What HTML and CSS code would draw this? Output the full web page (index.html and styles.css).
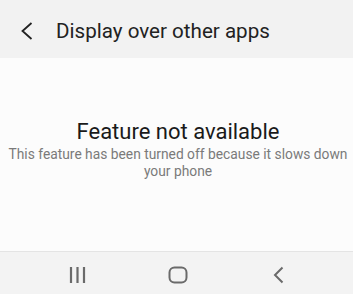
FILE: index.html
```html
<!DOCTYPE html>
<html>
<head>
<meta charset="utf-8">
<link rel="stylesheet" href="styles.css">
</head>
<body>
<div class="screen">
  <header class="appbar">
    <svg class="back" width="12" height="18" viewBox="0 0 12 18"><path d="M10.5 1 L1.5 9 L10.5 17" fill="none" stroke="#222" stroke-width="1.8"/></svg>
    <h1 class="title">Display over other apps</h1>
  </header>
  <main class="content">
    <h2 class="headline">Feature not available</h2>
    <p class="message">This feature has been turned off because it slows down your phone</p>
  </main>
  <nav class="navbar">
    <svg class="nav-icon" width="20" height="18" viewBox="0 0 20 18"><path d="M3 1 V17 M9.5 1 V17 M16 1 V17" stroke="#6a6a6a" stroke-width="2.2"/></svg>
    <svg class="nav-icon" width="20" height="18" viewBox="0 0 20 18"><rect x="1.5" y="1.5" width="17" height="15" rx="5" fill="none" stroke="#6a6a6a" stroke-width="2"/></svg>
    <svg class="nav-icon" width="20" height="18" viewBox="0 0 20 18"><path d="M14.5 1.5 L7 9 L14.5 16.5" fill="none" stroke="#6a6a6a" stroke-width="2"/></svg>
  </nav>
</div>
</body>
</html>
```
FILE: styles.css
```css
html, body { margin: 0; padding: 0; }
body { font-family: Roboto, "Noto Sans", sans-serif; background: #fcfcfc; }
.screen { width: 353px; height: 294px; display: flex; flex-direction: column; }
.appbar { height: 58px; background: #f2f2f2; display: flex; align-items: center; padding: 4px 0 0 21px; box-sizing: border-box; }
.back { margin-right: 23px; }
.title { margin: 0; font-weight: 400; font-size: 20.6px; color: #222; }
.content { flex: 1; background: #fcfcfc; display: flex; flex-direction: column; align-items: center; padding: 60px 0 0 3px; box-sizing: border-box; }
.headline { margin: 0; font-weight: 400; font-size: 22px; color: #1a1a1a; line-height: 28px; }
.message { margin: 0; width: 345px; text-align: center; font-size: 13.8px; line-height: 17px; color: #7a7a7a; }
.navbar { height: 43px; background: #f3f3f3; border-top: 1px solid #e4e4e4; display: flex; gap: 80px; align-items: center; padding: 3px 0 0 68px; box-sizing: border-box; }
.nav-icon { display: block; }
```
